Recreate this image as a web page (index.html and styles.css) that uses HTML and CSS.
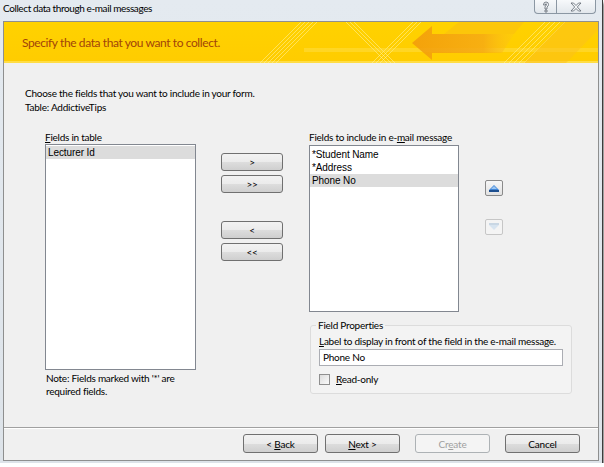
FILE: index.html
```html
<!DOCTYPE html>
<html>
<head>
<meta charset="utf-8">
<link rel="stylesheet" href="styles.css">
</head>
<body>
<div class="win">
  <div class="titlebar">
    <span class="title">Collect data through e-mail messages</span>
    <div class="caps">
      <span class="cap help">
        <svg width="22" height="14" viewBox="0 0 22 14"><path d="M8.5 5 Q8.5 2 11 2 Q13.5 2 13.5 4.5 Q13.5 6 12 7 L12 9 L10 9 L10 6.5 Q11.5 5.8 11.5 4.5 Q11.5 3.6 11 3.6 Q10.4 3.6 10.4 5 Z M10 10 L12 10 L12 12 L10 12 Z" fill="#f4f6f8" stroke="#5d6670" stroke-width="0.8"/></svg>
      </span>
      <span class="cap close">
        <svg width="38" height="14" viewBox="0 0 38 14"><path d="M14 3 L16.5 3 L19 5.5 L21.5 3 L24 3 L20.3 7 L24 11 L21.5 11 L19 8.5 L16.5 11 L14 11 L17.7 7 Z" fill="#f4f6f8" stroke="#5d6670" stroke-width="0.8"/></svg>
      </span>
    </div>
  </div>
  <div class="client">
    <div class="banner">
      <svg class="deco" width="594" height="41" viewBox="0 0 594 41">
        <defs>
          <linearGradient id="arr" x1="0" y1="0" x2="1" y2="0">
            <stop offset="0" stop-color="#f29a0c"/>
            <stop offset="0.7" stop-color="#f6aa14"/>
            <stop offset="1" stop-color="#fcc21c" stop-opacity="0.3"/>
          </linearGradient>
        </defs>
        <g stroke="#fff2a0" stroke-opacity="0.55" stroke-width="1" fill="none">
          <path d="M256 41 L297 0 M260 41 L301 0 M264 41 L305 0 M268 41 L309 0 M272 41 L313 0"/>
          <path d="M342 0 L383 41 M346 0 L387 41 M350 0 L391 41"/>
          <path d="M368 41 L409 0 M372 41 L413 0 M376 41 L417 0"/>
          <path d="M500 41 L541 0 M505 41 L546 0 M510 41 L551 0 M515 41 L556 0 M520 41 L561 0"/>
        </g>
        <rect x="300" y="26" width="294" height="4" fill="#ffe566" fill-opacity="0.35"/>
        <polygon points="408,21 428,4 428,12 510,12 498,31 428,31 428,38" fill="url(#arr)" fill-opacity="0.85"/>
        <polygon points="440,12 510,12 520,0 455,0" fill="#f7b61a" fill-opacity="0.4"/>
        <polygon points="520,41 560,0 594,0 594,8 562,41" fill="#fbbf1e" fill-opacity="0.5"/>
      </svg>
      <span class="banner-text">Specify the data that you want to collect.</span>
    </div>
    <div class="main">
      <p class="intro">Choose the fields that you want to include in your form.<br>Table: AddictiveTips</p>
      <div class="fields">
        <div class="col-left">
          <div class="lbl"><u>F</u>ields in table</div>
          <div class="list list-left">
            <div class="item sel">Lecturer Id</div>
          </div>
          <p class="note">Note: Fields marked with '*' are<br>required fields.</p>
        </div>
        <div class="col-mid">
          <button class="btn mbtn">&gt;</button>
          <button class="btn mbtn">&gt;&gt;</button>
          <button class="btn mbtn gap">&lt;</button>
          <button class="btn mbtn">&lt;&lt;</button>
        </div>
        <div class="col-right">
          <div class="right-top">
            <div class="rlist-col">
              <div class="lbl">Fields to include in e-<u>m</u>ail message</div>
              <div class="list list-right">
                <div class="item">*Student Name</div>
                <div class="item">*Address</div>
                <div class="item sel">Phone No</div>
              </div>
            </div>
            <div class="arrows">
              <span class="abtn">
                <svg width="16" height="14" viewBox="0 0 16 14"><polygon points="3,9 8,4 13,9" fill="#3f86d8"/><rect x="3" y="9" width="10" height="2" fill="#1d4f8f"/><polygon points="5,8 8,5 11,8" fill="#9cc6f2"/></svg>
              </span>
              <span class="abtn dis">
                <svg width="16" height="14" viewBox="0 0 16 14"><rect x="3" y="3" width="10" height="2" fill="#c9d7e4"/><polygon points="3,5 8,10 13,5" fill="#d7e4f0"/></svg>
              </span>
            </div>
          </div>
          <fieldset class="props">
            <legend>Field Properties</legend>
            <div class="plabel"><u>L</u>abel to display in front of the field in the e-mail message.</div>
            <div class="input">Phone No</div>
            <div class="check"><span class="box"></span><span><u>R</u>ead-only</span></div>
          </fieldset>
        </div>
      </div>
    </div>
    <div class="footer">
      <button class="btn fbtn">&lt; <u>B</u>ack</button>
      <button class="btn fbtn"><u>N</u>ext &gt;</button>
      <button class="btn fbtn disabled">Cr<u>e</u>ate</button>
      <button class="btn fbtn">Cancel</button>
    </div>
  </div>
</div>
</body>
</html>
```

FILE: styles.css
```css
body {
  margin: 0;
  background: #ffffff;
  font-family: Lato, "Open Sans", sans-serif;
  font-size: 10px;
  letter-spacing: -0.25px;
  color: #000;
}

.win {
  width: 602px;
  height: 463px;
  background: linear-gradient(#e4eaf0, #dde3e9);
  border-right: 1px solid #3c3c3c;
  box-shadow: 1px 3px 3px rgba(0, 0, 0, 0.6);
  display: flex;
  flex-direction: column;
}

.titlebar {
  height: 21px;
  display: flex;
  align-items: flex-start;
  flex: none;
}

.title {
  padding: 2px 0 0 3px;
  font-size: 10px;
  letter-spacing: -0.4px;
  line-height: 13px;
  color: #000;
  white-space: nowrap;
}

.caps {
  margin-left: auto;
  margin-right: 6px;
  display: flex;
}

.cap {
  height: 14px;
  box-sizing: border-box;
  border: 1px solid #8b97a3;
  border-top: none;
  background: linear-gradient(#f7f9fb, #e2e7ec);
  display: block;
}

.cap svg {
  display: block;
}

.help {
  width: 23px;
  border-radius: 0 0 0 4px;
}

.close {
  width: 39px;
  border-left: none;
  border-radius: 0 0 4px 0;
}

.client {
  margin: 0 3px;
  height: 440px;
  box-sizing: border-box;
  border: 1px solid #8e8f8f;
  background: #f0f0f0;
  display: flex;
  flex-direction: column;
}

.banner {
  height: 41px;
  flex: none;
  position: relative;
  display: flex;
  align-items: center;
  background: linear-gradient(#ffd200, #ffcc00);
  box-shadow: inset 0 -2px 0 #ffdd44;
  overflow: hidden;
}

.deco {
  position: absolute;
  left: 0;
  top: 0;
}

.banner-text {
  position: relative;
  padding-left: 18px;
  font-size: 12px;
  letter-spacing: -0.4px;
  color: #a2440a;
  white-space: nowrap;
}

.main {
  flex: 1;
  padding: 23px 0 0 21px;
}

.intro {
  margin: 0;
  line-height: 14px;
}

.fields {
  margin-top: 16px;
  padding-left: 20px;
  display: flex;
  align-items: flex-start;
}

.lbl {
  line-height: 14px;
  white-space: nowrap;
}

.list {
  box-sizing: border-box;
  border: 1px solid #828790;
  background: #fff;
  padding-top: 1px;
  font-family: "Liberation Sans", Arial, sans-serif;
  font-size: 10px;
  letter-spacing: -0.1px;
}

.item {
  height: 13px;
  line-height: 13px;
  padding-left: 2px;
  white-space: nowrap;
}

.item.sel {
  background: #dcdcdc;
}

.col-left {
  width: 151px;
}

.list-left {
  height: 226px;
}

.note {
  margin: 2px 0 0 1px;
  line-height: 13px;
}

.col-mid {
  width: 62px;
  margin-left: 25px;
  padding-top: 23px;
  display: flex;
  flex-direction: column;
  gap: 4px;
}

.btn {
  box-sizing: border-box;
  border: 1px solid #707070;
  border-radius: 3px;
  background: linear-gradient(#f2f2f2 0%, #ebebeb 50%, #dddddd 51%, #cfcfcf 100%);
  font-family: Lato, "Open Sans", sans-serif;
  font-size: 10px;
  letter-spacing: -0.2px;
  color: #000;
  padding: 0;
  line-height: 16px;
}

.mbtn {
  height: 18px;
  width: 62px;
}

.mbtn.gap {
  margin-top: 24px;
}

.col-right {
  margin-left: 26px;
  display: flex;
  flex-direction: column;
}

.right-top {
  display: flex;
  align-items: flex-start;
}

.rlist-col {
  width: 150px;
}

.list-right {
  height: 167px;
  margin-top: 1px;
  padding-top: 2px;
}

.arrows {
  margin-left: 26px;
  padding-top: 50px;
  display: flex;
  flex-direction: column;
  gap: 23px;
}

.abtn {
  width: 18px;
  height: 16px;
  box-sizing: border-box;
  border: 1px solid #8a8a8a;
  border-radius: 2px;
  background: linear-gradient(#f7f7f7, #e2e2e2);
  display: block;
}

.abtn svg {
  display: block;
}

.abtn.dis {
  border-color: #c6c6c6;
  background: #f4f4f4;
}

.props {
  margin: 6px 0 0 1px;
  width: 262px;
  min-width: 0;
  height: 76px;
  box-sizing: border-box;
  border: 1px solid #dcdcdc;
  border-radius: 3px;
  padding: 0 8px 0 8px;
  background: #f3f3f3;
}

.props legend {
  padding: 0 2px;
  margin-left: -3px;
  line-height: 14px;
}

.plabel {
  margin-top: 2px;
  line-height: 14px;
  white-space: nowrap;
}

.input {
  margin-top: 1px;
  width: 244px;
  height: 17px;
  box-sizing: border-box;
  border: 1px solid #abadb3;
  background: #fff;
  padding-left: 3px;
  line-height: 15px;
}

.check {
  margin-top: 7px;
  display: flex;
  align-items: center;
  gap: 6px;
}

.box {
  width: 11px;
  height: 11px;
  box-sizing: border-box;
  border: 1px solid #8f8f8f;
  background: linear-gradient(135deg, #dcdcdc, #fbfbfb);
  display: block;
}

.footer {
  height: 33px;
  flex: none;
  border-top: 1px solid #a0a0a0;
  box-shadow: inset 0 1px 0 #ffffff;
  box-sizing: border-box;
  display: flex;
  justify-content: flex-end;
  align-items: flex-start;
  padding: 6px 18px 0 0;
}

.fbtn {
  width: 75px;
  height: 19px;
  margin-left: 15px;
}

.fbtn:nth-child(2) {
  margin-left: 7px;
}

.fbtn.disabled {
  border-color: #adb2b5;
  background: #f4f4f4;
  color: #a0a0a0;
}
```
